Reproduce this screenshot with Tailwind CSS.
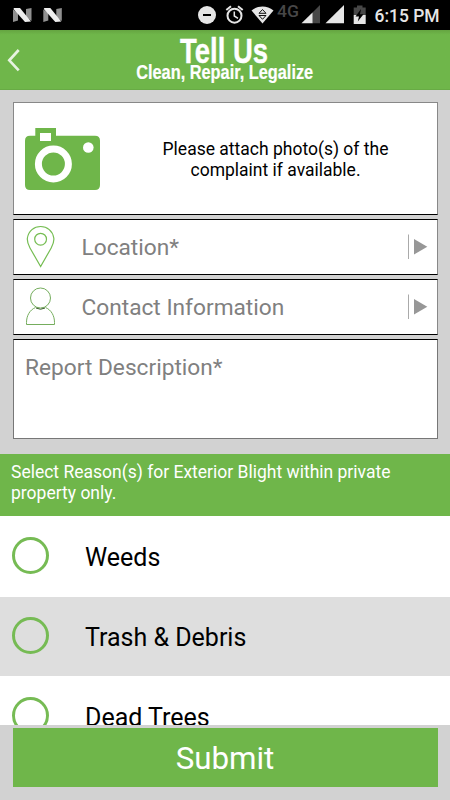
<!DOCTYPE html>
<html lang="en">
<head>
<meta charset="utf-8">
<title>Tell Us</title>
<script src="https://cdn.jsdelivr.net/npm/@tailwindcss/browser@4"></script>
</head>
<body class="bg-[#d2d2d2]">
<div class="flex h-[800px] w-[450px] flex-col overflow-hidden bg-[#d2d2d2] font-['Roboto','Liberation_Sans',sans-serif] text-black">
  <!-- Status bar -->
  <div class="flex h-[30px] shrink-0 bg-black">
    <svg class="h-[30px] w-[450px]" viewBox="0 0 450 30" role="img">
      <g><path fill="#909090" d="M13 9.500L18 13V20.500L13 22ZM26 9L31.500 8V21L26 17Z"/><path fill="#eee" d="M14 8H20L31 21.500L25 22L13.500 9Z"/></g>
      <g transform="translate(30.300 0)"><path fill="#909090" d="M13 9.500L18 13V20.500L13 22ZM26 9L31.500 8V21L26 17Z"/><path fill="#eee" d="M14 8H20L31 21.500L25 22L13.500 9Z"/></g>
      <circle cx="207" cy="15" r="9" fill="#e6e6e6"/><path fill="#000" d="M203 14h8v2h-8z"/>
      <g fill="none" stroke="#e6e6e6" stroke-width="2"><circle cx="234.500" cy="15.700" r="7"/><path d="M226.300 10L231 6.200M242.700 10L238 6.200"/><path stroke-width="1.500" d="M234.300 11.500V16L238 18.300"/></g>
      <path fill="#e6e6e6" d="M251.500 10.500C258 5.200 267 5.200 273.500 10.500L262.500 23.500Z"/>
      <path fill="#e6e6e6" stroke="#111" stroke-width="1" d="M262.500 9.500L266 13.300H259ZM259 15.500H266L262.500 19.300Z"/>
      <text x="277" y="16.500" font-size="16.500" font-weight="500" fill="#474747" textLength="22" lengthAdjust="spacingAndGlyphs">4G</text>
      <path fill="#474747" d="M320 5V23.300H312V13Z"/><path fill="#e6e6e6" d="M312.500 12.500V23.300H301.500Z"/>
      <path fill="#e6e6e6" d="M344 5V23.300H325.500Z"/>
      <path fill="#474747" d="M353.700 7.500H357V5.500H362.500V7.500H365.700V15H353.700Z"/><path fill="#e6e6e6" d="M353.700 15H365.700V24H353.700Z"/><path fill="#000" d="M361 9L355.500 16.500H359L357.800 21.500L363.500 14.300H360Z"/>
      <text x="374.500" y="22" font-size="18" font-weight="500" fill="#e6e6e6" textLength="65" lengthAdjust="spacingAndGlyphs">6:15 PM</text>
    </svg>
  </div>

  <!-- Header -->
  <header class="flex h-[60px] shrink-0 border-b border-[#68ab45] bg-[#6fb64a] bg-linear-to-b from-[#65a541] from-0% to-[#6fb64a] to-8%">
    <svg class="h-[60px] w-[450px] shrink-0" viewBox="0 30 450 60" role="img">
      <path d="M18.700 50L9.300 60.300L18.700 70.300" fill="none" stroke="#e7f3e1" stroke-width="2.700"/>
      <g fill="#fff" stroke="#fff" font-family="Liberation Sans, sans-serif" font-weight="700">
        <text x="180" y="62.700" font-size="35" stroke-width="0.400" textLength="88" lengthAdjust="spacingAndGlyphs">Tell Us</text>
        <text x="136.200" y="79" font-size="19.800" stroke-width="0.200" textLength="177" lengthAdjust="spacingAndGlyphs">Clean, Repair, Legalize</text>
      </g>
    </svg>
  </header>

  <!-- Form -->
  <main class="flex shrink-0 flex-col gap-1 pt-3 pr-[12.500px] pl-[12.500px]">
    <section class="flex h-[113px] items-center border border-[#888] border-b-black bg-white">
      <svg class="ml-[11px] h-[62px] w-[75px] shrink-0" viewBox="25 128 75 62">
        <path fill="#6fb64a" fill-rule="evenodd" d="M35.300 128H56V135.700H95Q100 135.700 100 140.700V185Q100 190 95 190H30Q25 190 25 185V140.700Q25 135.700 30 135.700H35.300ZM40 133V141H51V133Z"/>
        <circle cx="53.400" cy="164" r="15" fill="none" stroke="#fff" stroke-width="7"/><circle cx="88.300" cy="147.500" r="5.300" fill="#fff"/>
      </svg>
      <p class="ml-[50px] w-[252px] pt-[2px] text-center text-[17.500px] leading-[21px]">Please attach photo(s) of the<br>complaint if available.</p>
    </section>

    <section class="flex h-14 items-center border border-[#888] border-y-black bg-white text-[#808080]">
      <svg class="ml-[11px] h-[54px] w-8 shrink-0" viewBox="25 220 32 54" fill="none" stroke="#75bd52" stroke-width="1.200"><path d="M40.600 266.500L30 248C27.500 243.500 27 241 27.400 238C28.500 231 34 226.500 40.600 226.500S52.700 231 53.800 238C54.200 241 53.700 243.500 51.200 248Z"/><circle cx="40.600" cy="239.200" r="5.900"/></svg>
      <span class="ml-[25px] grow pt-[2px] text-[22.700px]">Location*</span>
      <svg class="mr-[9px] h-7 w-5" viewBox="408 233 20 28"><path stroke="#aaa" d="M408.500 234.500V259"/><path fill="#979797" d="M414 239L427.300 246.800L414 254.500Z"/></svg>
    </section>

    <section class="flex h-14 items-center border border-[#888] border-y-black bg-white text-[#808080]">
      <svg class="ml-[11px] h-[54px] w-8 shrink-0" viewBox="25 280 32 54" fill="none" stroke="#75ad5d"><circle cx="40.500" cy="298" r="10"/><path d="M35.500 307.500C29.500 310 26.500 316 26.500 322.500V324.500H54.500V322.500C54.500 316 51.500 310 45.500 307.500"/><path stroke="#365b27" d="M36 308Q40.500 310.500 45 308"/></svg>
      <span class="ml-[25px] grow pt-[2px] text-[22.700px]">Contact Information</span>
      <svg class="mr-[9px] h-7 w-5" viewBox="408 293 20 28"><path stroke="#aaa" d="M408.500 294.500V319"/><path fill="#979797" d="M414 299L427.300 306.800L414 314.500Z"/></svg>
    </section>

    <section class="h-[100px] border border-[#777] border-t-black bg-white px-[11.500px] pt-[15px] text-[22.700px] leading-[26px] text-[#808080]">Report Description*</section>
  </main>

  <!-- Reasons -->
  <h2 class="mt-[15px] h-[61.500px] shrink-0 bg-[#6fb64a] px-[11px] pt-[7.500px] text-[17.500px] leading-[21px] text-white">Select Reason(s) for Exterior Blight within private<br>property only.</h2>
  <ul class="flex h-[209.500px] shrink-0 flex-col overflow-hidden bg-white text-[25px]">
    <li class="flex h-[81.500px] shrink-0 items-center pb-[2px] pl-[12.400px]"><span class="size-[37px] rounded-full border-[3px] border-[#76bb54]"></span><span class="ml-[35.600px] pt-[5px]">Weeds</span></li>
    <li class="flex h-[78.500px] shrink-0 items-center bg-[#dedede] pb-[2px] pl-[12.400px]"><span class="size-[37px] rounded-full border-[3px] border-[#76bb54]"></span><span class="ml-[35.600px] pt-[5px]">Trash &amp; Debris</span></li>
    <li class="flex h-[82px] shrink-0 items-center pb-[2px] pl-[12.400px]"><span class="size-[37px] rounded-full border-[3px] border-[#76bb54]"></span><span class="ml-[35.600px] pt-[5px]">Dead Trees</span></li>
  </ul>

  <div class="flex grow bg-[#d2d2d2] px-[12.500px] pt-[3px]">
    <button class="h-[59px] w-full bg-[#6fb64a] pt-[3px] text-[31.300px] leading-none text-white">Submit</button>
  </div>
</div>
</body>
</html>
